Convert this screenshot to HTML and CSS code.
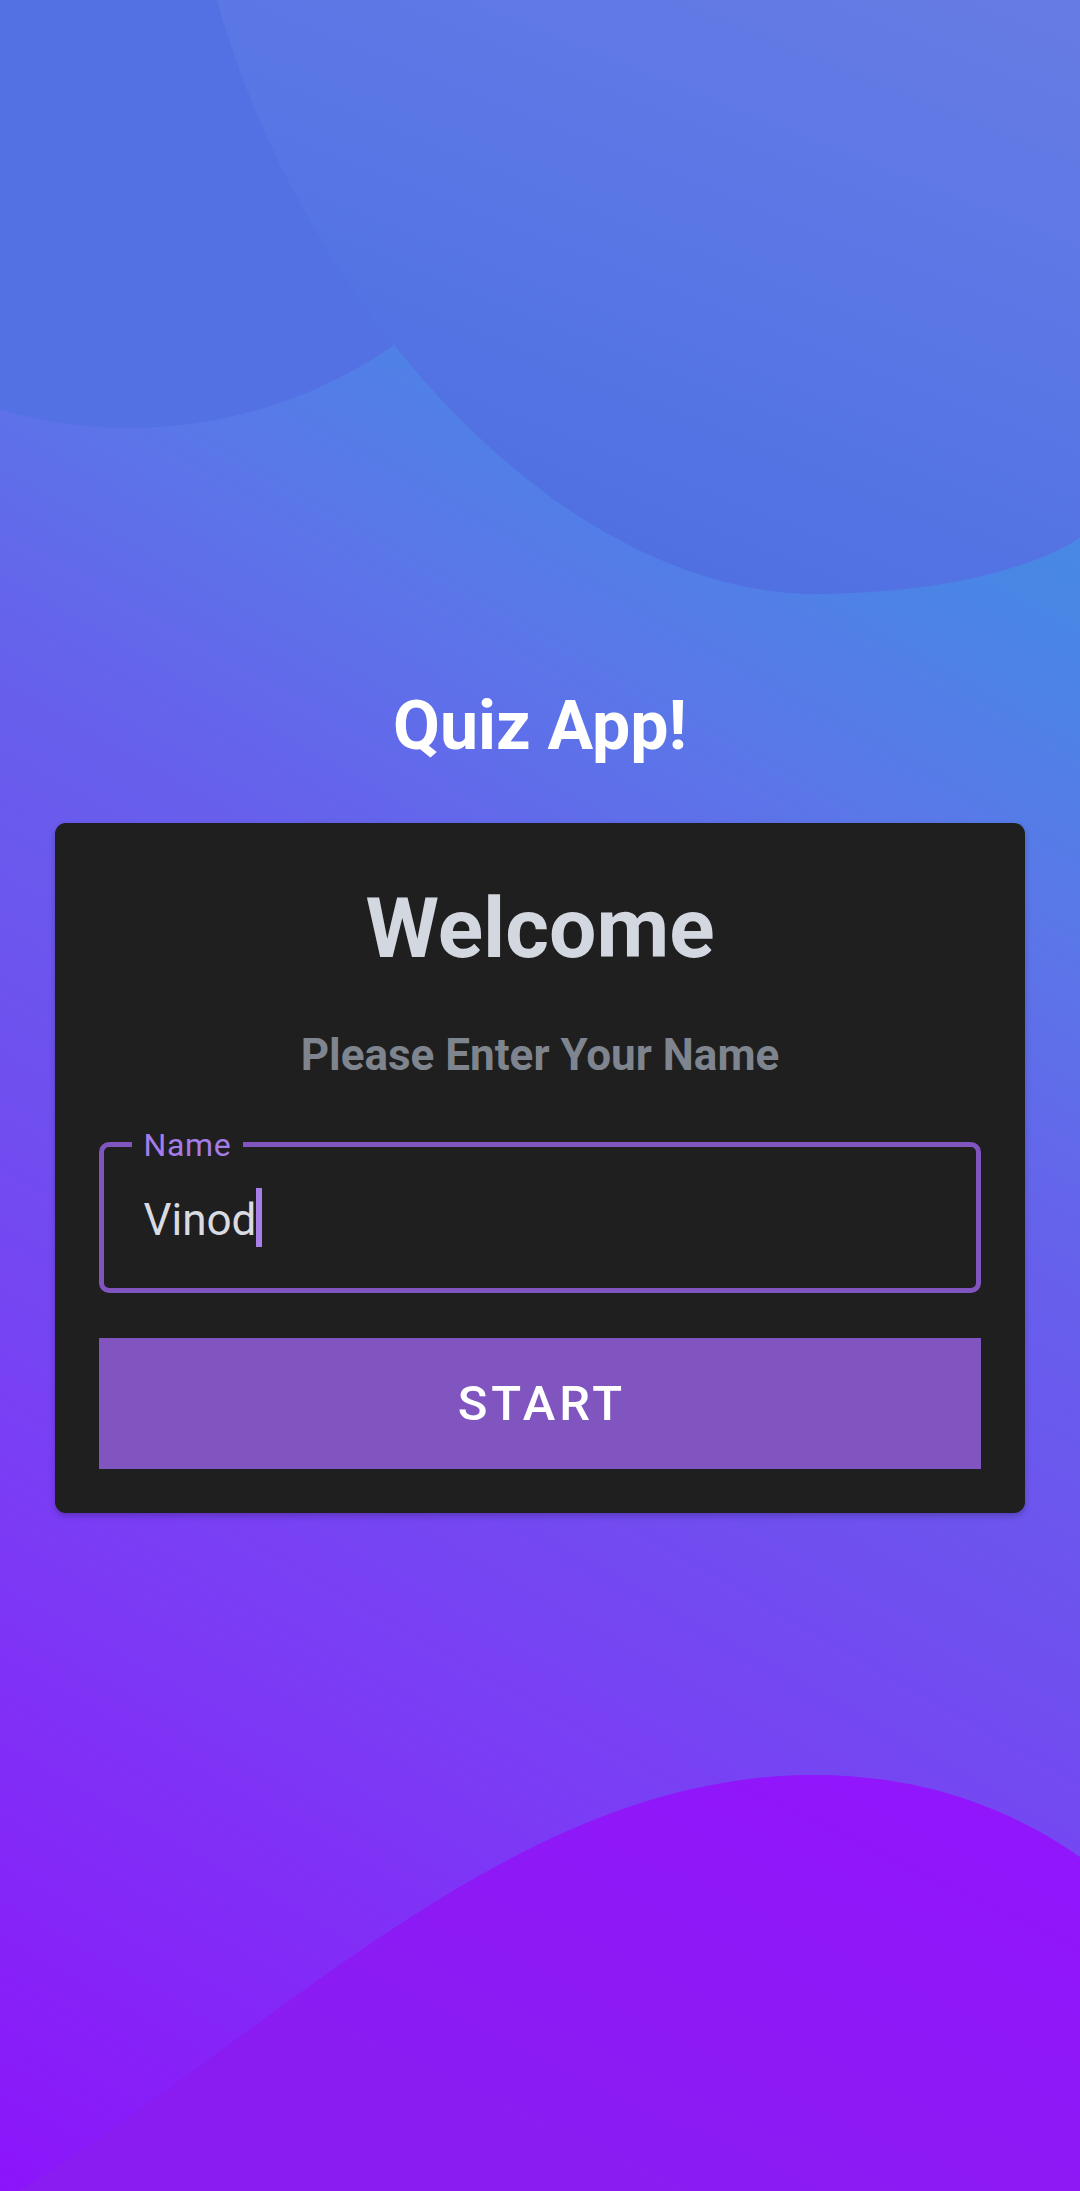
FILE: index.html
```html
<!DOCTYPE html>
<html lang="en">
<head>
<meta charset="utf-8">
<title>Quiz App</title>
<link rel="stylesheet" href="styles.css">
</head>
<body>
<div class="screen">
  <svg class="bg-shapes" viewBox="0 0 1080 2191" preserveAspectRatio="none" aria-hidden="true">
    <defs>
      <linearGradient id="bgGrad" gradientUnits="userSpaceOnUse" x1="1080" y1="300" x2="0" y2="2191">
        <stop offset="0" stop-color="#4590e2"/>
        <stop offset="0.14" stop-color="#4a85e5"/>
        <stop offset="0.25" stop-color="#5a78e8"/>
        <stop offset="0.4" stop-color="#675fec"/>
        <stop offset="0.55" stop-color="#6f50ef"/>
        <stop offset="0.72" stop-color="#7b3cf5"/>
        <stop offset="1" stop-color="#8c14fa"/>
      </linearGradient>
      <linearGradient id="bigGrad" gradientUnits="userSpaceOnUse" x1="1000" y1="0" x2="760" y2="600">
        <stop offset="0" stop-color="#667be4"/>
        <stop offset="0.5" stop-color="#5a77e5"/>
        <stop offset="1" stop-color="#5070e2"/>
      </linearGradient>
      <linearGradient id="botGrad" gradientUnits="userSpaceOnUse" x1="800" y1="1775" x2="600" y2="2191">
        <stop offset="0" stop-color="#9116fb"/>
        <stop offset="1" stop-color="#8a1cf1"/>
      </linearGradient>
    </defs>
    <rect x="0" y="0" width="1080" height="2191" fill="url(#bgGrad)"/>
    <circle cx="129" cy="-38" r="466" fill="#5471e4"/>
    <path d="M217,0 C300,300 560,600 826,594 C940,592 1030,570 1080,538 L1080,0 Z" fill="url(#bigGrad)"/>
    <path d="M20,2191 C300,2010 520,1780 806,1775 C930,1773 1020,1815 1080,1857 L1080,2191 Z" fill="url(#botGrad)"/>
  </svg>

  <main class="content">
    <h1 class="app-title">Quiz App!</h1>
    <section class="card">
      <h2 class="welcome">Welcome</h2>
      <p class="prompt">Please Enter Your Name</p>
      <div class="field">
        <span class="field-label">Name</span>
        <div class="field-value"><span class="field-text">Vinod</span><span class="caret"></span></div>
      </div>
      <button class="start-btn" type="button">START</button>
    </section>
  </main>
</div>
</body>
</html>
```

FILE: styles.css
```css
* {
  box-sizing: border-box;
}

html, body {
  margin: 0;
  padding: 0;
}

body {
  font-family: Roboto, "Liberation Sans", Arial, sans-serif;
  background: #6a5aec;
}

.screen {
  position: relative;
  width: 1080px;
  height: 2191px;
  overflow: hidden;
}

.bg-shapes {
  position: absolute;
  left: 0;
  top: 0;
  width: 1080px;
  height: 2191px;
  display: block;
}

.content {
  position: relative;
  height: 100%;
  display: flex;
  flex-direction: column;
  align-items: center;
  justify-content: center;
  padding-top: 7px;
}

.app-title {
  margin: 0 0 56px;
  font-size: 68px;
  line-height: 82px;
  font-weight: 700;
  color: #ffffff;
  text-align: center;
}

.card {
  width: 970px;
  background: #1f1f1f;
  border-radius: 11px;
  padding: 56px 44px 44px;
  box-shadow: 0 3px 6px rgba(0, 0, 0, 0.22);
  display: flex;
  flex-direction: column;
  align-items: stretch;
}

.welcome {
  margin: 0;
  font-size: 84px;
  font-weight: 700;
  line-height: normal;
  color: #d3d7e0;
  text-align: center;
}

.prompt {
  margin: 51px 0 0;
  font-size: 44px;
  font-weight: 700;
  line-height: normal;
  color: #7f858f;
  text-align: center;
}

.field {
  position: relative;
  margin-top: 61px;
  height: 151px;
  border: 5.5px solid #8155c0;
  border-radius: 10px;
  padding: 40.5px 0 0 39.5px;
}

.field-label {
  position: absolute;
  left: 27.5px;
  top: -18px;
  padding: 0 12px;
  background: #1f1f1f;
  font-size: 32px;
  line-height: 33px;
  letter-spacing: 0.02em;
  color: #a57ce8;
}

.field-value {
  display: flex;
  align-items: flex-start;
}

.field-text {
  padding-top: 5px;
  font-size: 44px;
  line-height: 54px;
  color: #d9dbe1;
}

.caret {
  display: block;
  width: 6px;
  height: 59px;
  margin-left: 0;
  background: #a87ee9;
}

.start-btn {
  margin-top: 45px;
  height: 131px;
  border: none;
  border-radius: 0;
  background: #8155c0;
  color: #ffffff;
  font-family: Roboto, "Liberation Sans", Arial, sans-serif;
  font-size: 49px;
  font-weight: 500;
  letter-spacing: 0.08em;
  padding: 0;
  text-indent: 0.08em;
}
```
